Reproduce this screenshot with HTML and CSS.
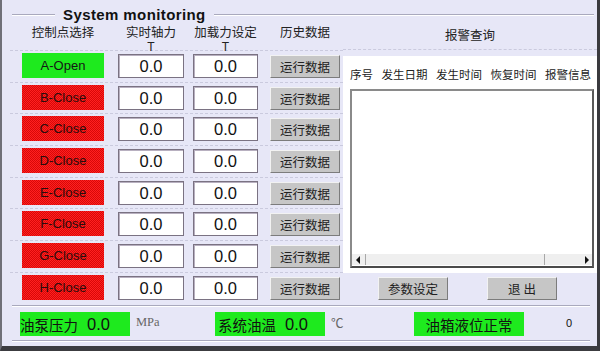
FILE: index.html
```html
<!DOCTYPE html>
<html lang="zh-CN">
<head>
    <meta charset="UTF-8">
    <title>System monitoring</title>
    <link rel="stylesheet" href="styles.css">
</head>
<body>
<div class="window">
    <div class="titlebar"><span class="title">System monitoring</span></div>

    <div class="main">
        <div class="left">
            <div class="head">
                <div class="c1">控制点选择</div>
                <div class="c2">实时轴力<br><span class="unit">T</span></div>
                <div class="c3">加载力设定<br><span class="unit">T</span></div>
                <div class="c4">历史数据</div>
            </div>
            <div class="row">
                <div class="c1 point open">A-Open</div>
                <div class="c2 value">0.0</div>
                <div class="c3 value">0.0</div>
                <button class="c4 btn">运行数据</button>
            </div>
            <div class="row">
                <div class="c1 point closed">B-Close</div>
                <div class="c2 value">0.0</div>
                <div class="c3 value">0.0</div>
                <button class="c4 btn">运行数据</button>
            </div>
            <div class="row">
                <div class="c1 point closed">C-Close</div>
                <div class="c2 value">0.0</div>
                <div class="c3 value">0.0</div>
                <button class="c4 btn">运行数据</button>
            </div>
            <div class="row">
                <div class="c1 point closed">D-Close</div>
                <div class="c2 value">0.0</div>
                <div class="c3 value">0.0</div>
                <button class="c4 btn">运行数据</button>
            </div>
            <div class="row">
                <div class="c1 point closed">E-Close</div>
                <div class="c2 value">0.0</div>
                <div class="c3 value">0.0</div>
                <button class="c4 btn">运行数据</button>
            </div>
            <div class="row">
                <div class="c1 point closed">F-Close</div>
                <div class="c2 value">0.0</div>
                <div class="c3 value">0.0</div>
                <button class="c4 btn">运行数据</button>
            </div>
            <div class="row">
                <div class="c1 point closed">G-Close</div>
                <div class="c2 value">0.0</div>
                <div class="c3 value">0.0</div>
                <button class="c4 btn">运行数据</button>
            </div>
            <div class="row">
                <div class="c1 point closed">H-Close</div>
                <div class="c2 value">0.0</div>
                <div class="c3 value">0.0</div>
                <button class="c4 btn">运行数据</button>
            </div>
        </div>

        <div class="right">
            <div class="alarm-head">报警查询</div>
            <div class="alarm-panel">
                <div class="cols">
                    <span>序号</span>
                    <span>发生日期</span>
                    <span>发生时间</span>
                    <span>恢复时间</span>
                    <span>报警信息</span>
                </div>
                <div class="list">
                    <div class="list-body"></div>
                    <div class="hscroll">
                        <span class="arrow-l"></span>
                        <span class="track"></span>
                        <span class="arrow-r"></span>
                    </div>
                </div>
            </div>
            <div class="actions">
                <button class="btn wide">参数设定</button>
                <button class="btn wide">退&nbsp;出</button>
            </div>
        </div>
    </div>

    <div class="sep"></div>

    <div class="status">
        <div class="lamp pump"><span>油泵压力</span><span class="num">0.0</span></div>
        <span class="su mpa">MPa</span>
        <div class="lamp temp"><span>系统油温</span><span class="num">0.0</span></div>
        <span class="su deg">℃</span>
        <div class="lamp level">油箱液位正常</div>
        <span class="count">0</span>
    </div>

    <div class="sep"></div>
</div>
</body>
</html>
```

FILE: styles.css
```css
body {
    margin: 0;
    font-family: "Liberation Sans", "Noto Sans CJK SC", sans-serif;
    color: #1a1a1a;
}
.window {
    width: 600px;
    height: 351px;
    box-sizing: border-box;
    background: #e7e7f7;
    border-left: 2px solid #707078;
    border-right: 3px solid #3a3a3e;
    border-bottom: 5px solid #3c3c40;
}

/* group title */
.titlebar {
    display: flex;
    align-items: center;
    gap: 8px;
    height: 16px;
    padding: 7px 3px 0 10px;
}
.titlebar::before,
.titlebar::after {
    content: "";
    height: 1px;
    border-bottom: 1px solid #fff;
    background: #a9a9bd;
}
.titlebar::before { width: 43px; }
.titlebar::after { flex: 1; }
.title {
    font-weight: bold;
    font-size: 15px;
    line-height: 16px;
    letter-spacing: 0.4px;
    color: #111;
}

.main {
    display: flex;
    height: 281px;
    padding-left: 8px;
}
.left { width: 333px; }
.right { width: 254px; }

.head, .row {
    display: flex;
    padding-left: 12px;
}
.head {
    height: 27px;
    font-family: "Noto Sans CJK SC", sans-serif;
    font-size: 12.5px;
    line-height: 14px;
    text-align: center;
    color: #222;
    padding-top: 2px;
    box-sizing: border-box;
}
.unit {
    display: inline-block;
    font-family: "Liberation Sans", sans-serif;
    font-size: 12px;
    line-height: 11px;
    padding-top: 1px;
}
.c1 { width: 82px; }
.c2 { width: 66px; margin-left: 14px; }
.c3 { width: 65px; margin-left: 9px; }
.c4 { width: 70px; margin-left: 12px; }

.row {
    height: 31.7px;
    box-sizing: border-box;
    border-top: 1px dashed #cacade;
    align-items: flex-start;
    padding-top: 2px;
}
.point {
    height: 25px;
    line-height: 25px;
    text-align: center;
    font-size: 13px;
    color: #151515;
}
.open { background: #1eea1e; }
.closed {
    background-color: #f01414;
    background-image: repeating-conic-gradient(#ff2020 0 25%, #d80808 0 50%);
    background-size: 2px 2px;
    color: #2a0c0c;
}
.value {
    height: 24px;
    box-sizing: border-box;
    margin-top: 1px;
    background: #fff;
    border: 1px solid #7a7282;
    box-shadow: inset 1px 1px 0 #b8b0c0;
    text-align: center;
    font-size: 16.5px;
    line-height: 22px;
    color: #111;
}
.btn {
    height: 23px;
    margin-top: 2px;
    padding: 0;
    background: #c6c6c6;
    border: 1px solid;
    border-color: #f2f2f2 #7c7c7c #7c7c7c #f2f2f2;
    font-family: "Noto Sans CJK SC", sans-serif;
    font-size: 12.5px;
    color: #222;
}

/* alarm query */
.alarm-head {
    height: 27px;
    box-sizing: border-box;
    border-bottom: 1px dashed #cacade;
    text-align: center;
    padding-top: 2px;
    font-family: "Noto Sans CJK SC", sans-serif;
    font-size: 12.5px;
    color: #222;
}
.alarm-panel {
    margin-top: 6px;
    height: 217px;
    box-sizing: border-box;
    background: #fff;
    padding: 11px 3px 5px 7px;
    display: flex;
    flex-direction: column;
}
.cols {
    display: flex;
    gap: 8.5px;
    height: 14px;
    line-height: 14px;
    font-family: "Noto Sans CJK SC", sans-serif;
    font-size: 11.5px;
    color: #222;
    white-space: nowrap;
}
.list {
    margin-top: 8px;
    flex: 1;
    display: flex;
    flex-direction: column;
    border: 2px solid;
    border-color: #8a8a8a #5a5a5a #4a4a4a #8a8a8a;
    background: #fff;
}
.list-body { flex: 1; }
.hscroll {
    height: 11px;
    margin: 0 0 1px 0;
    display: flex;
    align-items: center;
    background: #efefef;
}
.arrow-l, .arrow-r {
    width: 0;
    height: 0;
    border-top: 4px solid transparent;
    border-bottom: 4px solid transparent;
}
.arrow-l {
    border-right: 4px solid #111;
    margin-left: 4px;
}
.track {
    flex: 1;
    height: 11px;
    margin-left: 5px;
    border-left: 1px solid #a8a8a8;
    border-right: 1px solid #a8a8a8;
    margin-right: 40px;
}
.arrow-r {
    border-left: 4px solid #111;
    margin-right: 3px;
}
.actions {
    display: flex;
    gap: 39px;
    margin-top: 4px;
    padding-left: 35px;
}
.btn.wide { width: 70px; margin-top: 0; }

/* status strip */
.sep {
    height: 1px;
    margin: 1px 7px 0 10px;
    background: #a9a9bd;
    border-bottom: 1px solid #fff;
}
.status {
    display: flex;
    align-items: center;
    height: 24px;
    margin: 5px 0 4px 18px;
}
.lamp {
    height: 24px;
    width: 110px;
    box-sizing: border-box;
    background: #1eea1e;
    display: flex;
    align-items: center;
    font-family: "Noto Sans CJK SC", sans-serif;
    font-size: 14.5px;
    color: #111;
}
.num {
    font-family: "Liberation Sans", sans-serif;
    font-size: 16.5px;
    margin-left: 9px;
}
.temp { padding-left: 3px; }
.su {
    font-family: "Liberation Serif", serif;
    font-size: 12.5px;
    color: #666;
    margin-top: -3px;
}
.mpa { margin-left: 6px; width: 79px; }
.deg { margin-left: 6px; width: 83px; font-family: "Noto Sans CJK SC", sans-serif; }
.level { justify-content: center; }
.count {
    margin-left: 42px;
    font-size: 11px;
    color: #111;
    margin-top: -3px;
}
```
